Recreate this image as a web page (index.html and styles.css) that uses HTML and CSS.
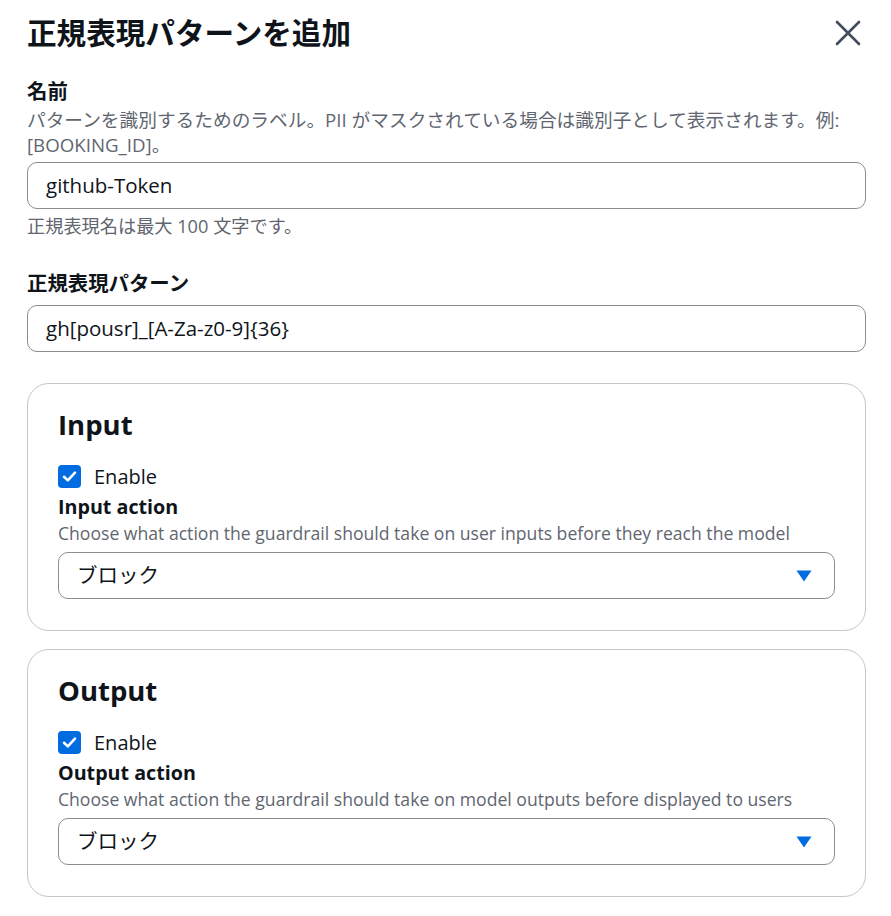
FILE: index.html
```html
<!DOCTYPE html>
<html lang="ja">
<head>
<meta charset="utf-8">
<title>正規表現パターンを追加</title>
<link rel="stylesheet" href="styles.css">
</head>
<body>
<div class="modal">
  <header class="modal-header">
    <h2 class="modal-title">正規表現パターンを追加</h2>
    <button class="close" aria-label="閉じる">
      <svg width="28" height="28" viewBox="0 0 28 28"><path d="M3 3 L25 25 M25 3 L3 25" stroke="#414d5c" stroke-width="2.6" stroke-linecap="round" fill="none"/></svg>
    </button>
  </header>

  <div class="field field-name">
    <div class="label">名前</div>
    <div class="desc">パターンを識別するためのラベル。PII がマスクされている場合は識別子として表示されます。例: [BOOKING_ID]。</div>
    <div class="input">github-Token</div>
    <div class="constraint">正規表現名は最大 100 文字です。</div>
  </div>

  <div class="field field-pattern">
    <div class="label">正規表現パターン</div>
    <div class="input input-pattern">gh[pousr]_[A-Za-z0-9]{36}</div>
  </div>

  <section class="box">
    <h3 class="box-title">Input</h3>
    <label class="check">
      <span class="checkbox"><svg width="23" height="23" viewBox="0 0 23 23"><path d="M6 11.8 L9.8 15.4 L17 7.6" stroke="#fff" stroke-width="2.6" fill="none" stroke-linecap="round" stroke-linejoin="round"/></svg></span>
      <span>Enable</span>
    </label>
    <div class="label label-en">Input action</div>
    <div class="desc desc-en">Choose what action the guardrail should take on user inputs before they reach the model</div>
    <div class="select">
      <span>ブロック</span>
      <svg class="caret" width="16" height="12" viewBox="0 0 16 12"><path d="M0.5 0.5 H15.5 L8 11.5 Z" fill="#006ce0"/></svg>
    </div>
  </section>

  <section class="box box-output">
    <h3 class="box-title">Output</h3>
    <label class="check">
      <span class="checkbox"><svg width="23" height="23" viewBox="0 0 23 23"><path d="M6 11.8 L9.8 15.4 L17 7.6" stroke="#fff" stroke-width="2.6" fill="none" stroke-linecap="round" stroke-linejoin="round"/></svg></span>
      <span>Enable</span>
    </label>
    <div class="label label-en">Output action</div>
    <div class="desc desc-en">Choose what action the guardrail should take on model outputs before displayed to users</div>
    <div class="select">
      <span>ブロック</span>
      <svg class="caret" width="16" height="12" viewBox="0 0 16 12"><path d="M0.5 0.5 H15.5 L8 11.5 Z" fill="#006ce0"/></svg>
    </div>
  </section>
</div>
</body>
</html>
```

FILE: styles.css
```css
* { box-sizing: border-box; }
html, body { margin: 0; padding: 0; background: #ffffff; }
body {
  font-family: "Open Sans", "Noto Sans CJK JP", sans-serif;
  color: #0f141a;
  font-size: 20px;
  line-height: 25px;
}
.modal {
  padding: 15px 25px 20px 27px;
}
.modal-header {
  display: flex;
  align-items: center;
  justify-content: space-between;
  height: 36px;
}
.modal-title {
  margin: 0;
  font-size: 29.6px;
  line-height: 36px;
  font-weight: 700;
}
.close {
  border: 0;
  background: none;
  padding: 0;
  margin-right: 4px;
  width: 28px;
  height: 28px;
  display: flex;
}
.field-name { margin-top: 28px; }
.field-pattern { margin-top: 32px; }
.label {
  font-weight: 700;
  font-size: 20.4px;
  line-height: 25px;
}
.label-en { font-size: 19.7px; }
.desc {
  color: #5f6670;
  font-size: 18.7px;
  line-height: 25px;
  margin-top: 3px;
}
.desc-en {
  margin-top: 2px;
  font-size: 17.6px;
}
.input, .select {
  height: 47px;
  border: 1.4px solid #8c8c94;
  border-radius: 10px;
  padding: 0 18px;
  display: flex;
  align-items: center;
  font-size: 20.5px;
}
.field-name .input { margin-top: 5px; }
.input-pattern { margin-top: 9px; }
.constraint {
  color: #5f6670;
  font-size: 18.2px;
  margin-top: 5px;
}
.box {
  margin-top: 31px;
  border: 1.3px solid #c6c6cd;
  border-radius: 22px;
  padding: 25px 30px 31px 30px;
}
.box-output { margin-top: 18px; }
.box-title {
  margin: 0;
  font-size: 27.5px;
  line-height: 32px;
  font-weight: 700;
}
.check {
  display: flex;
  align-items: center;
  gap: 13px;
  margin-top: 22px;
  height: 26px;
}
.checkbox {
  width: 23px;
  height: 23px;
  border-radius: 4px;
  background: #006ce0;
  display: flex;
}
.check + .label { margin-top: 5px; }
.select {
  margin-top: 6px;
  justify-content: space-between;
  padding-right: 22px;
}
.caret { display: block; }
```
